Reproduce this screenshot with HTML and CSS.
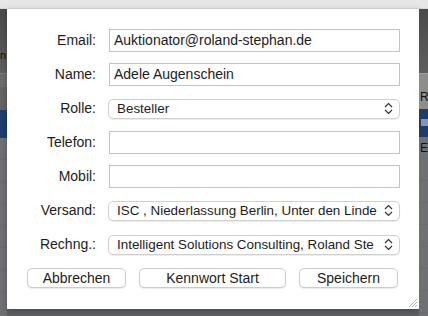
FILE: index.html
```html
<!DOCTYPE html>
<html>
<head>
  <title>Benutzer bearbeiten</title>
  <meta name="viewport" content="width=device-width, initial-scale=1.0" />
  <link rel="stylesheet" href="styles.css">
</head>
<body>
  <div class="screen">
    <div class="topbar"></div>

    <div class="side side-left">
      <div class="band band-dark"><span class="peek peek-left">n</span></div>
      <div class="band band-head"></div>
      <div class="band band-row"></div>
      <div class="band band-sel"></div>
      <div class="band band-rest"></div>
    </div>

    <form class="sheet">
      <div class="fields">
        <label class="lbl">Email:</label>
        <div class="field">Auktionator@roland-stephan.de</div>

        <label class="lbl">Name:</label>
        <div class="field">Adele Augenschein</div>

        <label class="lbl">Rolle:</label>
        <div class="cell">
          <div class="popup"><span class="popup-text">Besteller</span>
            <svg class="chev" width="9" height="13" viewBox="0 0 9 13"><path d="M1 5 L4.5 1.5 L8 5 M1 8 L4.5 11.5 L8 8" fill="none" stroke="#333" stroke-width="1.2"/></svg>
          </div>
        </div>

        <label class="lbl">Telefon:</label>
        <div class="field"></div>

        <label class="lbl">Mobil:</label>
        <div class="field"></div>

        <label class="lbl">Versand:</label>
        <div class="cell">
          <div class="popup"><span class="popup-text">ISC , Niederlassung Berlin, Unter den Linde</span>
            <svg class="chev" width="9" height="13" viewBox="0 0 9 13"><path d="M1 5 L4.5 1.5 L8 5 M1 8 L4.5 11.5 L8 8" fill="none" stroke="#333" stroke-width="1.2"/></svg>
          </div>
        </div>

        <label class="lbl">Rechng.:</label>
        <div class="cell">
          <div class="popup"><span class="popup-text">Intelligent Solutions Consulting, Roland Ste</span>
            <svg class="chev" width="9" height="13" viewBox="0 0 9 13"><path d="M1 5 L4.5 1.5 L8 5 M1 8 L4.5 11.5 L8 8" fill="none" stroke="#333" stroke-width="1.2"/></svg>
          </div>
        </div>
      </div>

      <div class="buttons">
        <button type="button" class="btn btn-small">Abbrechen</button>
        <button type="button" class="btn btn-wide">Kennwort Start</button>
        <button type="button" class="btn btn-small">Speichern</button>
      </div>

      <svg class="grip" width="11" height="11" viewBox="0 0 11 11"><path d="M10 2 L2 10 M10 5 L5 10 M10 8 L8 10" stroke="#b5b5b5" stroke-width="1"/></svg>
    </form>

    <div class="side side-right">
      <div class="band band-dark"></div>
      <div class="band band-light"><span class="peek">R</span></div>
      <div class="band band-sel"><span class="mini"></span></div>
      <div class="band band-rest"><span class="peek peek-e">E</span></div>
    </div>

    <div class="under"></div>
  </div>
</body>
</html>
```

FILE: styles.css
```css
body {
  margin: 0;
  font-family: "Liberation Sans", Arial, sans-serif;
  font-size: 14px;
  color: #1c1c1c;
  background-color: #6e6f73;
}
.screen {
  width: 428px;
  height: 316px;
  display: grid;
  grid-template-columns: 7px 412px 9px;
  grid-template-rows: 9px 300px 7px;
  overflow: hidden;
}
.topbar {
  grid-column: 1 / 4;
  background-color: #e6e6e6;
  border-bottom: 1px solid #d6d6d6;
}
.side {
  grid-row: 2 / 4;
  display: flex;
  flex-direction: column;
  overflow: hidden;
}
.side-left { grid-column: 1; }
.side-right { grid-column: 3; }
.under {
  grid-column: 2;
  grid-row: 3;
  background-color: #5f6064;
}
.band {
  position: relative;
  overflow: hidden;
}
.band-dark {
  height: 64px;
  background: linear-gradient(#4a4a4a, #5e5e5e);
}
.band-head {
  height: 12px;
  background-color: #6c6c6c;
  border-top: 1px solid #7a7a7a;
}
.band-row {
  height: 23px;
  background-color: #646464;
  border-top: 1px solid #727272;
}
.band-sel {
  height: 28px;
  background-color: #1f3d6b;
}
.band-rest {
  flex: 1;
  background: repeating-linear-gradient(#6f7074 0, #6f7074 21px, #6a6b6f 21px, #6a6b6f 22px);
}
.band-light {
  height: 35px;
  background-color: #8d8d8d;
  border-top: 1px solid #a0a0a0;
}
.peek {
  position: absolute;
  left: 1px;
  top: 16px;
  font-size: 12px;
  color: #111;
}
.peek-left {
  left: 0;
  top: 40px;
  font-size: 11px;
}
.peek-e {
  top: 4px;
}
.mini {
  position: absolute;
  left: 2px;
  top: 10px;
  width: 7px;
  height: 7px;
  background-color: #8796ad;
}

.sheet {
  grid-column: 2;
  grid-row: 2;
  position: relative;
  margin: 0;
  background-color: #fff;
  padding: 20px 21px 0 0;
  box-shadow: 0 2px 6px rgba(0,0,0,0.25);
}
.fields {
  display: grid;
  grid-template-columns: 89px 291px;
  grid-auto-rows: 23px;
  column-gap: 13px;
  row-gap: 11px;
}
.lbl {
  text-align: right;
  align-self: center;
  line-height: 23px;
}
.field {
  border: 1px solid #c3c3c3;
  padding: 0 4px;
  line-height: 21px;
  white-space: nowrap;
  overflow: hidden;
}
.cell {
  display: flex;
  align-items: center;
  margin-left: -1px;
}
.popup {
  flex: 1;
  height: 20px;
  box-sizing: border-box;
  display: flex;
  align-items: center;
  border: 1px solid #d0d0d0;
  border-radius: 5px;
  box-shadow: 0 1px 1px rgba(0,0,0,0.08);
  padding: 0 6px 0 8px;
}
.popup-text {
  flex: 1;
  font-size: 13.4px;
  white-space: nowrap;
}
.chev {
  flex: none;
}
.buttons {
  display: flex;
  gap: 13px;
  margin: 12px 0 0 20px;
}
.btn {
  height: 20px;
  padding: 0;
  font-family: "Liberation Sans", Arial, sans-serif;
  font-size: 14px;
  color: #1c1c1c;
  background-color: #fff;
  border: 1px solid #cbcbcb;
  border-radius: 5px;
  box-shadow: 0 1px 1px rgba(0,0,0,0.08);
}
.btn-small { width: 99px; }
.btn-wide { width: 147px; }
.grip {
  position: absolute;
  right: 1px;
  bottom: 1px;
}
```
